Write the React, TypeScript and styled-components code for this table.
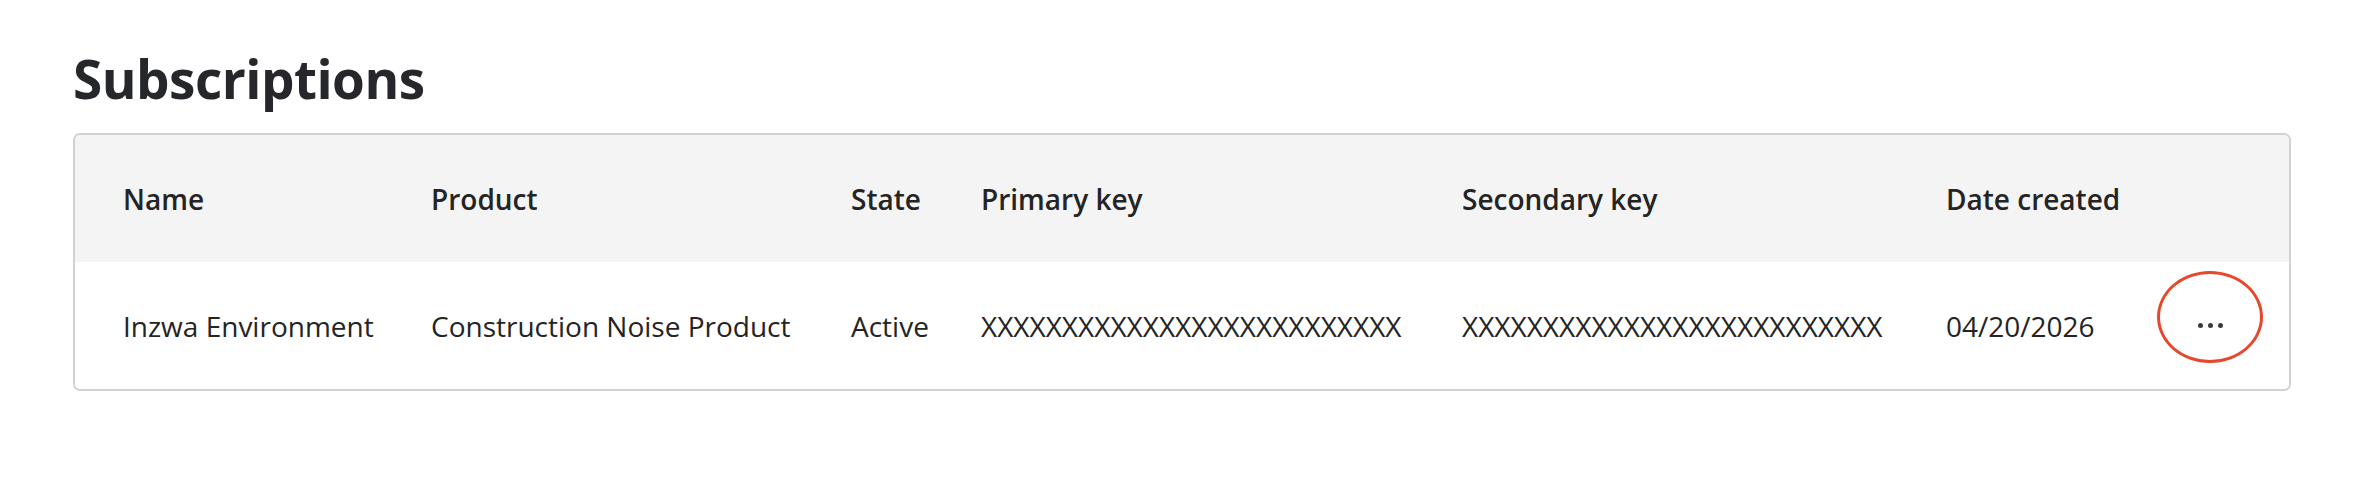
import React from "react";
import styled, { createGlobalStyle } from "styled-components";

const Global = createGlobalStyle`
  html, body { margin: 0; padding: 0; background: #ffffff; }
  body { font-family: "Open Sans", "Noto Sans", sans-serif; color: #242424; }
`;

const Page = styled.main`
  padding: 45px 0 0 73px;
  width: 2218px;
`;

const Title = styled.h1`
  margin: 0 0 21px 0;
  font-size: 53px;
  line-height: 67px;
  font-weight: 700;
  color: #25272b;
  letter-spacing: -0.5px;
`;

const Table = styled.div`
  border: 2px solid #d2d2d2;
  border-radius: 7px;
  overflow: hidden;
`;

const Row = styled.div<{ $head?: boolean }>`
  display: grid;
  grid-template-columns: 308px 420px 130px 481px 484px 204px 1fr;
  align-items: center;
  height: 127px;
  padding: 0 19px 0 48px;
  background: ${(p) => (p.$head ? "#f4f4f4" : "#ffffff")};
`;

const HeadCell = styled.div`
  font-size: 28px;
  font-weight: 600;
  color: #242424;
  white-space: nowrap;
`;

const Cell = styled.div`
  font-size: 28px;
  font-weight: 400;
  color: #242424;
  white-space: nowrap;
`;

const ActionCell = styled.div`
  display: flex;
  justify-content: center;
  align-items: center;
`;

const MoreButton = styled.button`
  box-sizing: border-box;
  width: 106px;
  height: 92px;
  margin-top: -18px;
  padding: 18px 0 0 0;
  border: 3px solid #e8472b;
  border-radius: 50%;
  background: transparent;
  display: flex;
  align-items: center;
  justify-content: center;
  gap: 5px;
  cursor: pointer;
`;

const Dot = styled.span`
  width: 5px;
  height: 5px;
  border-radius: 50%;
  background: #3a3a3a;
`;

const columns = ["Name", "Product", "State", "Primary key", "Secondary key", "Date created"];

const data = [
  {
    name: "Inzwa Environment",
    product: "Construction Noise Product",
    state: "Active",
    primary: "XXXXXXXXXXXXXXXXXXXXXXXXXX",
    secondary: "XXXXXXXXXXXXXXXXXXXXXXXXXX",
    date: "04/20/2026",
  },
];

export default function App() {
  return (
    <>
      <Global />
      <Page>
        <Title>Subscriptions</Title>
        <Table>
          <Row $head>
            {columns.map((c) => (
              <HeadCell key={c}>{c}</HeadCell>
            ))}
            <div />
          </Row>
          {data.map((r) => (
            <Row key={r.name}>
              <Cell>{r.name}</Cell>
              <Cell>{r.product}</Cell>
              <Cell>{r.state}</Cell>
              <Cell>{r.primary}</Cell>
              <Cell>{r.secondary}</Cell>
              <Cell>{r.date}</Cell>
              <ActionCell>
                <MoreButton aria-label="More actions">
                  <Dot />
                  <Dot />
                  <Dot />
                </MoreButton>
              </ActionCell>
            </Row>
          ))}
        </Table>
      </Page>
    </>
  );
}
